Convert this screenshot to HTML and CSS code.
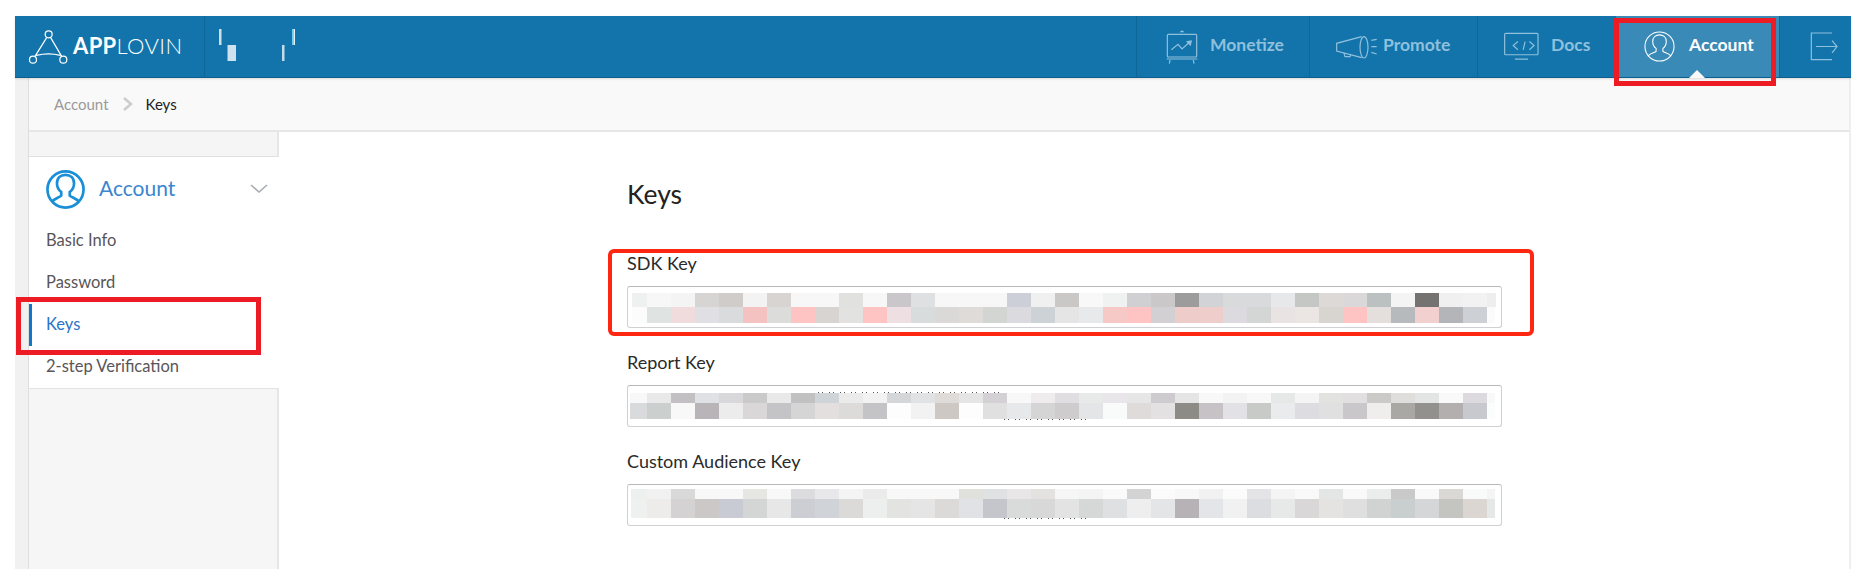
FILE: index.html
```html
<!DOCTYPE html>
<html lang="en">
<head>
<meta charset="utf-8">
<title>AppLovin - Keys</title>
<link rel="stylesheet" href="styles.css">
</head>
<body>
<div class="app">
  <header class="topbar">
    <a class="brand">
      <svg class="brand-mark" viewBox="84 84 120 108" width="40" height="36" fill="none" stroke="#fff" stroke-width="3.6">
        <circle cx="146" cy="100" r="10.5"/><circle cx="99" cy="176" r="10.5"/><circle cx="190" cy="176" r="10.5"/>
        <path d="M140 110 105 166M152 110 185 166M109 163Q146 154 181 163"/>
      </svg>
      <span class="brand-name"><b>APP</b>LOVIN</span>
    </a>
    <div class="app-switch">
      <svg viewBox="0 0 157 61" width="157" height="61">
        <rect x="15" y="13" width="2.5" height="16" fill="#cfdfe9"/>
        <rect x="23.5" y="29" width="8.5" height="16" fill="#cde2ee"/>
        <rect x="78" y="29" width="2.5" height="16" fill="#c4dce9"/>
        <rect x="88" y="13" width="1.5" height="16" fill="#6fd0f0"/>
        <rect x="89.5" y="13" width="1.5" height="16" fill="#e6f1f6"/>
      </svg>
    </div>
    <nav class="nav">
      <a class="nav-item nav-monetize">
        <svg viewBox="104 84 96 108" width="32" height="36" fill="none" stroke="#8fc0dc" stroke-width="3.6">
          <rect x="108" y="100" width="88" height="68" rx="3"/>
          <path d="M106 174H198M116 177 114 188M186 177 188 188M120 146 140 130 152 144 172 126"/>
          <path d="M164 121 182 118 178 136Z" fill="#8fc0dc" stroke="none"/>
          <path d="M144 94 152 88 160 94Z" fill="#8fc0dc" stroke="none"/>
        </svg>
        <span>Monetize</span>
      </a>
      <a class="nav-item nav-promote">
        <svg viewBox="618 100 126 72" width="42" height="24" fill="none" stroke="#8fc0dc" stroke-width="3.6">
          <ellipse cx="702" cy="137" rx="12" ry="32"/>
          <path d="M695 105 620 125V148L695 168M642 155 645 165H660L662 160M724 116 740 113M724 135H740M724 152 740 157"/>
        </svg>
        <span>Promote</span>
      </a>
      <a class="nav-item nav-docs">
        <svg viewBox="25 37 106 86" width="35" height="29" fill="none" stroke="#8fc0dc" stroke-width="3.6">
          <rect x="27" y="40" width="101" height="65" rx="3"/>
          <path d="M58 118H98M67 65 53 77 67 90M83 90 89 65M102 65 116 77 102 90"/>
        </svg>
        <span>Docs</span>
      </a>
      <a class="nav-item nav-active">
        <svg class="user-icon" viewBox="0 0 32 32" width="31" height="31" fill="none" stroke="#fff" stroke-width="1.1">
          <circle cx="16" cy="16" r="15"/>
          <path d="M4 26C6 23 11 22.5 12.5 21V18C10 16 9 13 9 11 9 6.5 12 4 16 4S23 6.5 23 11C23 13 22 16 19.5 18V21C21 22.5 26 23 28 26"/>
        </svg>
        <span>Account</span>
      </a>
      <a class="nav-item nav-logout">
        <svg viewBox="838 92 88 92" width="29" height="31" fill="none" stroke="#8fc0dc" stroke-width="3.6">
          <path d="M905 97H842V178H905M856 138H920M905 120 920 138 905 157"/>
        </svg>
      </a>
    </nav>
  </header>

  <div class="stage">
    <div class="gutter"></div>
    <div class="page">
      <div class="crumbs">
        <a class="crumb">Account</a>
        <svg class="crumb-sep" viewBox="0 0 10 14" width="10" height="14" fill="none" stroke="#ccc" stroke-width="2.5"><path d="M1 1 8 7 1 13"/></svg>
        <span class="crumb-current">Keys</span>
      </div>
      <div class="content">
        <aside class="sidebar">
          <div class="side-strip"></div>
          <div class="side-head">
            <svg class="side-icon" viewBox="0 0 32 32" width="39" height="39" fill="none" stroke="#1a8fd8" stroke-width="2.2">
              <circle cx="16" cy="16" r="14.8"/>
              <path d="M5 26C7 23 11 22.5 12.5 21V18C10 16 9 13 9 11 9 6.5 12 4 16 4S23 6.5 23 11C23 13 22 16 19.5 18V21C21 22.5 25 23 27 26"/>
            </svg>
            <span class="side-title">Account</span>
            <svg class="side-caret" viewBox="0 0 18 9" width="18" height="9" fill="none" stroke="#a9adb3" stroke-width="1.6"><path d="M1 1 9 8 17 1"/></svg>
          </div>
          <ul class="side-list">
            <li class="side-item">Basic Info</li>
            <li class="side-item">Password</li>
            <li class="side-item side-item-active">Keys</li>
            <li class="side-item">2-step Verification</li>
          </ul>
          <div class="side-fill"></div>
        </aside>
        <main class="main">
          <h1 class="title">Keys</h1>

          <div class="group">
            <label class="label">SDK Key</label>
            <div class="field field-sdk">
              <div class="mos"><i style="background:#eff1f0"></i><i style="background:#f7f7f7"></i><i style="background:#f4f4f4"></i><i style="background:#d6d5d3"></i><i style="background:#d0ccca"></i><i style="background:#f3f3f3"></i><i style="background:#d8d4d1"></i><i style="background:#f7f7f7"></i><i style="background:#f7f7f7"></i><i style="background:#e1e1e0"></i><i style="background:#f7f7f7"></i><i style="background:#cac7ca"></i><i style="background:#dfe0e2"></i><i style="background:#f7f7f7"></i><i style="background:#f7f7f7"></i><i style="background:#f7f7f7"></i><i style="background:#ccced8"></i><i style="background:#f0f0f0"></i><i style="background:#cac7c7"></i><i style="background:#f8f8f8"></i><i style="background:#f0f2f1"></i><i style="background:#d0d0d2"></i><i style="background:#cbc8ca"></i><i style="background:#9c9c9c"></i><i style="background:#d2d3d6"></i><i style="background:#d9dadc"></i><i style="background:#d9dadc"></i><i style="background:#e7e8ea"></i><i style="background:#c5c7c5"></i><i style="background:#ddd9d6"></i><i style="background:#dbd8d9"></i><i style="background:#bbc0c0"></i><i style="background:#f4f4f4"></i><i style="background:#757272"></i><i style="background:#f0f0f0"></i><i style="background:#f2f2f2"></i><i style="background:#eeeeee"></i></div>
              <div class="mos"><i style="background:#fcfcfc"></i><i style="background:#dfe3e2"></i><i style="background:#f0dcdc"></i><i style="background:#e0dfe3"></i><i style="background:#d9dbdd"></i><i style="background:#f4c2c0"></i><i style="background:#dcdcda"></i><i style="background:#fec4c4"></i><i style="background:#d8d4d1"></i><i style="background:#e2e2e0"></i><i style="background:#fec4c4"></i><i style="background:#eee0e2"></i><i style="background:#d8dcdd"></i><i style="background:#dbd9d7"></i><i style="background:#dfdbd9"></i><i style="background:#d3d5d3"></i><i style="background:#dbdadf"></i><i style="background:#ccd2d6"></i><i style="background:#e5e5e5"></i><i style="background:#e7e9eb"></i><i style="background:#f6c8c6"></i><i style="background:#fec4c4"></i><i style="background:#d2d0d3"></i><i style="background:#eeccca"></i><i style="background:#efcdca"></i><i style="background:#dddadf"></i><i style="background:#d3d6d4"></i><i style="background:#e9e3e3"></i><i style="background:#ebe6e3"></i><i style="background:#d8d5d0"></i><i style="background:#fec4c4"></i><i style="background:#e4dfdc"></i><i style="background:#b6babc"></i><i style="background:#f2d0cf"></i><i style="background:#b4b5b8"></i><i style="background:#cdd0d5"></i><i style="background:#fbfbfb"></i></div>
            </div>
          </div>

          <div class="group">
            <label class="label">Report Key</label>
            <div class="field field-report">
              <div class="mos"><i style="background:#f8f8f8"></i><i style="background:#e8e9e8"></i><i style="background:#c2c0c2"></i><i style="background:#e0e1e4"></i><i style="background:#d8d8da"></i><i style="background:#c9cac9"></i><i style="background:#e9e9e9"></i><i style="background:#c2c1c2"></i><i style="background:#ced4d8"></i><i style="background:#ebebeb"></i><i style="background:#f2f2f2"></i><i style="background:#d5d6d8"></i><i style="background:#e0e2e4"></i><i style="background:#dedbd9"></i><i style="background:#e5e5e6"></i><i style="background:#d3d1d3"></i><i style="background:#f8f8f8"></i><i style="background:#eeeced"></i><i style="background:#e0dee0"></i><i style="background:#e8eae9"></i><i style="background:#e8e6e9"></i><i style="background:#e6e6e6"></i><i style="background:#cdcbce"></i><i style="background:#e5e5e5"></i><i style="background:#f8f8f8"></i><i style="background:#f3f3f3"></i><i style="background:#f8f8f8"></i><i style="background:#e5e8e7"></i><i style="background:#f4f4f4"></i><i style="background:#e2e2e0"></i><i style="background:#e2dfe0"></i><i style="background:#cbcac8"></i><i style="background:#dfdedc"></i><i style="background:#e2e5e4"></i><i style="background:#f9f9f9"></i><i style="background:#dcdade"></i><i style="background:#f8f8f8"></i></div>
              <div class="mos"><i style="background:#d9dadb"></i><i style="background:#cbd0cf"></i><i style="background:#f8f8f8"></i><i style="background:#b9b4b8"></i><i style="background:#ececec"></i><i style="background:#d9d7d8"></i><i style="background:#c4c3c6"></i><i style="background:#d5d5d6"></i><i style="background:#e3dfde"></i><i style="background:#dcdbd9"></i><i style="background:#c4c4c7"></i><i style="background:#fdfdfd"></i><i style="background:#f2f2f2"></i><i style="background:#cdc8c4"></i><i style="background:#fdfdfd"></i><i style="background:#e0e0e1"></i><i style="background:#e7e8ea"></i><i style="background:#d5d5d5"></i><i style="background:#cecccd"></i><i style="background:#e3e5e7"></i><i style="background:#f9fbfa"></i><i style="background:#dfdbda"></i><i style="background:#e3e1e2"></i><i style="background:#8c8b85"></i><i style="background:#c7c2c5"></i><i style="background:#e2e2e6"></i><i style="background:#c8cac8"></i><i style="background:#e9ebed"></i><i style="background:#dcdce1"></i><i style="background:#e0e0e0"></i><i style="background:#c9c7ca"></i><i style="background:#efeeec"></i><i style="background:#a9a8a5"></i><i style="background:#92918e"></i><i style="background:#b3afaf"></i><i style="background:#c7c9ce"></i><i style="background:#fbfcfc"></i></div>
              <span class="dots dots-top"></span>
              <span class="dots dots-bottom"></span>
            </div>
          </div>

          <div class="group">
            <label class="label">Custom Audience Key</label>
            <div class="field field-custom">
              <div class="mos"><i style="background:#eef0ef"></i><i style="background:#f0f1f0"></i><i style="background:#d9d9d9"></i><i style="background:#f8f8f8"></i><i style="background:#f8f8f8"></i><i style="background:#e6e7e3"></i><i style="background:#f8f8f8"></i><i style="background:#dcdcdf"></i><i style="background:#e8e8ea"></i><i style="background:#f4f4f4"></i><i style="background:#ebebeb"></i><i style="background:#f8f8f8"></i><i style="background:#f8f8f8"></i><i style="background:#f8f8f8"></i><i style="background:#e0e0dd"></i><i style="background:#dfe1e3"></i><i style="background:#e8e6e6"></i><i style="background:#e3e2e1"></i><i style="background:#f6f6f6"></i><i style="background:#f4f4f4"></i><i style="background:#fafafa"></i><i style="background:#d3d3d3"></i><i style="background:#fbfbfb"></i><i style="background:#f8f8f8"></i><i style="background:#f1f1f1"></i><i style="background:#fbfbfb"></i><i style="background:#e4e4e6"></i><i style="background:#f4f4f4"></i><i style="background:#f9f9f9"></i><i style="background:#e3e6e5"></i><i style="background:#f9f9f9"></i><i style="background:#ebedec"></i><i style="background:#c9c9c9"></i><i style="background:#f9f9f9"></i><i style="background:#d9d8d5"></i><i style="background:#f9fbfa"></i><i style="background:#f4f4f4"></i></div>
              <div class="mos"><i style="background:#eff0f0"></i><i style="background:#edecea"></i><i style="background:#d4d2d3"></i><i style="background:#cdc8c8"></i><i style="background:#c8cbd3"></i><i style="background:#d4d6d5"></i><i style="background:#e7e7e7"></i><i style="background:#ccced3"></i><i style="background:#d0d3d8"></i><i style="background:#dbdad8"></i><i style="background:#edeeee"></i><i style="background:#e3e3e1"></i><i style="background:#e5e5e6"></i><i style="background:#dbdad8"></i><i style="background:#e1e2e5"></i><i style="background:#c5c6cb"></i><i style="background:#d9dbda"></i><i style="background:#d9d8d8"></i><i style="background:#e3e3e3"></i><i style="background:#d5d8d7"></i><i style="background:#dee0e2"></i><i style="background:#eeeeee"></i><i style="background:#e4e5e7"></i><i style="background:#b6b2b5"></i><i style="background:#e4e5e8"></i><i style="background:#f1f1f2"></i><i style="background:#dcdde0"></i><i style="background:#e7e9e8"></i><i style="background:#d9d7d8"></i><i style="background:#e4e3e1"></i><i style="background:#dfdfdf"></i><i style="background:#d1d2d2"></i><i style="background:#c9cfcf"></i><i style="background:#d4d6d8"></i><i style="background:#c4c4c0"></i><i style="background:#dbd6d2"></i><i style="background:#e6e8e7"></i></div>
              <span class="dots dots-bottom"></span>
            </div>
          </div>
        </main>
      </div>
    </div>
  </div>
</div>

<div class="mark mark-account"></div>
<div class="mark mark-keys"></div>
<div class="mark-thin"></div>
</body>
</html>
```
FILE: styles.css
```css
* { box-sizing: border-box; }
html, body { margin: 0; padding: 0; height: 100%; }
body {
  position: relative;
  overflow: hidden;
  background: #fff;
  font-family: "Lato", "Open Sans", sans-serif;
  color: #222;
}
a { color: inherit; text-decoration: none; }
ul { list-style: none; margin: 0; padding: 0; }

.app {
  display: flex;
  flex-direction: column;
  height: 553px;
  margin: 16px 7px 0 15px;
}

/* top bar */
.topbar {
  display: flex;
  height: 62px;
  flex: none;
  background: #1274ab;
  border-bottom: 1px solid #0e5f8e;
  box-shadow: 0 1px 2px rgba(0, 0, 0, .12);
  position: relative;
  z-index: 1;
}
.brand {
  display: flex;
  align-items: center;
  width: 189px;
  padding-left: 13px;
  gap: 5px;
  flex: none;
}
.brand-mark { flex: none; margin-top: 1px; }
.brand-name {
  color: #fff;
  font-size: 22px;
  font-weight: 300;
  letter-spacing: .35px;
  line-height: 1;
  white-space: nowrap;
  margin-bottom: 2px;
}
.brand-name b { font-weight: 700; }
.app-switch {
  width: 157px;
  flex: none;
  border-left: 1px solid #0f6698;
}
.app-switch svg { display: block; margin-left: -1px; }
.nav { display: flex; margin-left: auto; height: 61px; }
.nav-item {
  position: relative;
  display: flex;
  align-items: center;
  border-left: 1px solid #0f6698;
  color: #8fc0dc;
  font-size: 17.5px;
  font-weight: 700;
  white-space: nowrap;
}
.nav-item svg { flex: none; }
.nav-item span { margin-bottom: 4px; }
.nav-monetize { width: 173px; padding-left: 29px; gap: 12px; }
.nav-promote { width: 168px; padding-left: 26px; gap: 5px; }
.nav-docs { width: 139px; padding-left: 26px; gap: 12px; }
.nav-active {
  width: 163px;
  padding-left: 27px;
  gap: 14px;
  background: #398ab7;
  color: #fff;
  border-left-color: #398ab7;
}
.nav-active::after {
  content: "";
  position: absolute;
  left: 72px;
  bottom: -1px;
  border: 8px solid transparent;
  border-top: 0;
  border-bottom-color: #f9f9f9;
}
.nav-logout { width: 72px; padding-left: 30px; }

/* stage */
.stage { display: flex; flex: 1; min-height: 0; }
.gutter {
  width: 14px;
  flex: none;
  background: #f1f1f1;
  border-right: 1px solid #dedede;
}
.page {
  flex: 1;
  display: flex;
  flex-direction: column;
  min-width: 0;
  border-right: 2px solid #eee;
}
.crumbs {
  display: flex;
  align-items: center;
  height: 54px;
  flex: none;
  padding-left: 25px;
  background: #f9f9f9;
  border-bottom: 2px solid #e6e6e6;
  font-size: 15px;
}
.crumb { color: #999; }
.crumb-sep { margin: 0 13px 0 14px; flex: none; }
.crumb-current { color: #222; }
.content { display: flex; flex: 1; min-height: 0; }

/* sidebar */
.sidebar {
  width: 250px;
  flex: none;
  display: flex;
  flex-direction: column;
}
.side-strip {
  height: 25px;
  flex: none;
  background: #f5f5f5;
  border-bottom: 1px solid #e0e0e0;
  border-right: 2px solid #e6e6e6;
}
.side-head {
  display: flex;
  align-items: center;
  height: 63px;
  flex: none;
  padding: 0 11px 0 17px;
}
.side-icon { flex: none; margin-top: 1px; }
.side-title {
  margin: 0 0 3px 14px;
  font-size: 21px;
  font-weight: 400;
  color: #3a86cf;
}
.side-caret { margin-left: auto; }
.side-list { flex: none; }
.side-item {
  display: flex;
  align-items: center;
  height: 42px;
  padding: 0 0 2px 17px;
  font-size: 16.5px;
  color: #5a5558;
}
.side-item-active {
  color: #2a75c8;
  padding-left: 14px;
  border-left: 3px solid #1277c9;
}
.side-fill {
  flex: 1;
  background: #f6f6f6;
  border-top: 1px solid #e3e3e3;
  border-right: 2px solid #e6e6e6;
}

/* main */
.main { flex: 1; padding: 47px 0 0 348px; }
.title {
  margin: 0 0 44px;
  font-size: 26.5px;
  font-weight: 400;
  line-height: 30px;
  color: #222;
}
.group { margin-bottom: 24px; }
.label {
  display: block;
  font-size: 18px;
  line-height: 20px;
  color: #2a2a2a;
  margin-bottom: 13px;
}
.field {
  position: relative;
  width: 875px;
  height: 42px;
  background: #fff;
  border: 1px solid #d0d0d4;
  border-top-color: #b8b8bc;
  border-radius: 3px;
}
.mos { display: flex; }
.mos i { display: block; width: 24px; flex: none; }
.mos i:first-child { width: var(--lead); }
.mos i:last-child { width: 8px; }
.field-sdk { --lead: 15px; padding: 6px 0 0 4px; }
.field-sdk .mos:first-child { height: 14px; }
.field-sdk .mos:first-child i:last-child { width: 9px; }
.field-sdk .mos + .mos { height: 16px; }
.field-report { --lead: 17px; padding: 7px 0 0 2px; }
.field-report .mos:first-child { height: 10px; }
.field-report .mos + .mos { height: 16px; }
.field-custom { --lead: 16px; padding: 4px 0 0 3px; }
.field-custom .mos:first-child { height: 10px; }
.field-custom .mos + .mos { height: 19px; }
.dots {
  position: absolute;
  height: 1px;
  background: repeating-linear-gradient(90deg, #555 0 1px, transparent 1px 4px, #555 4px 5px, transparent 5px 11px);
}
.dots-top { left: 190px; top: 6px; width: 182px; }
.dots-bottom { left: 376px; top: 33px; width: 87px; }

/* annotation boxes */
.mark {
  position: absolute;
  border: 5px solid #ed1c24;
  pointer-events: none;
  z-index: 5;
}
.mark-account { left: 1614px; top: 18px; width: 162px; height: 68px; }
.mark-keys { left: 16px; top: 297px; width: 245px; height: 58px; }
.mark-thin {
  position: absolute;
  left: 608px;
  top: 249px;
  width: 926px;
  height: 87px;
  border: 4px solid #fe2712;
  border-radius: 6px;
  z-index: 5;
}
```
